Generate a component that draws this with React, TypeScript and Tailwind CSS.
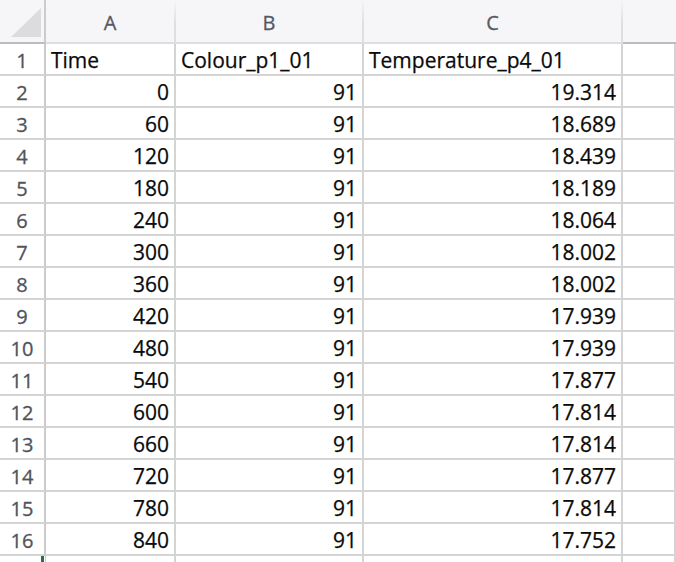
import React from "react";

const rows: [string, string, string][] = [
  ["0", "91", "19.314"],
  ["60", "91", "18.689"],
  ["120", "91", "18.439"],
  ["180", "91", "18.189"],
  ["240", "91", "18.064"],
  ["300", "91", "18.002"],
  ["360", "91", "18.002"],
  ["420", "91", "17.939"],
  ["480", "91", "17.939"],
  ["540", "91", "17.877"],
  ["600", "91", "17.814"],
  ["660", "91", "17.814"],
  ["720", "91", "17.877"],
  ["780", "91", "17.814"],
  ["840", "91", "17.752"],
];

const font = { fontFamily: '"Open Sans", "Liberation Sans", sans-serif' };

const hdr =
  "h-[44px] bg-[#f6f5f7] border-b-2 border-b-[#bdbdbd] flex items-center justify-center pt-[3px] text-[20px] text-[#565a60] [-webkit-text-stroke:0.3px_#565a60]";
const rowNum =
  "h-[32px] border-b-2 border-b-[#d4d4d4] border-r-2 border-r-[#cbcbcb] flex items-center justify-center pt-[3px] text-[20px] text-[#50545a] [-webkit-text-stroke:0.3px_#50545a]";
const cell =
  "h-[32px] border-b-2 border-b-[#d4d4d4] border-r-2 border-r-[#d4d4d4] flex items-center pt-[3px] px-[5px] text-[21px] text-[#0a0a0a] [-webkit-text-stroke:0.25px_#0a0a0a] whitespace-nowrap overflow-hidden";

export default function App() {
  return (
    <div className="w-[676px] h-[562px] overflow-hidden bg-white" style={font}>
      <div className="grid grid-cols-[46px_130px_188px_259px_1fr]">
        {/* header row */}
        <div className={`${hdr} border-r-2 border-r-[#cbcbcb] items-end justify-end pb-[4px] pr-[2px]`}>
          <svg width="32" height="31" viewBox="0 0 32 31">
            <polygon points="1,30 31,30 31,1" fill="#dcdcde" />
          </svg>
        </div>
        <div className={`${hdr} border-r-2 [border-image:linear-gradient(to_bottom,#f6f5f7,#dedede_60%)_1]`}>A</div>
        <div className={`${hdr} border-r-2 [border-image:linear-gradient(to_bottom,#f6f5f7,#dedede_60%)_1]`}>B</div>
        <div className={`${hdr} border-r-2 [border-image:linear-gradient(to_bottom,#f6f5f7,#dedede_60%)_1]`}>C</div>
        <div className={hdr}></div>

        {/* row 1 */}
        <div className={rowNum}>1</div>
        <div className={`${cell} justify-start`}>Time</div>
        <div className={`${cell} justify-start`}>Colour_p1_01</div>
        <div className={`${cell} justify-start`}>Temperature_p4_01</div>
        <div className={`${cell} border-r-0`}></div>

        {rows.map((r, i) => (
          <React.Fragment key={i}>
            <div className={rowNum}>{i + 2}</div>
            <div className={`${cell} justify-end`}>{r[0]}</div>
            <div className={`${cell} justify-end`}>{r[1]}</div>
            <div className={`${cell} justify-end`}>{r[2]}</div>
            <div className={`${cell} border-r-0`}></div>
          </React.Fragment>
        ))}

        {/* row 17 partial */}
        <div className="h-[32px] flex justify-end">
          <div className="w-[3px] ml-auto mr-px bg-[#217346]"></div>
          <div className="w-px bg-[#cbcbcb]"></div>
        </div>
        <div className={`${cell}`}></div>
        <div className={`${cell}`}></div>
        <div className={`${cell}`}></div>
        <div className={`${cell} border-r-0`}></div>
      </div>
    </div>
  );
}
